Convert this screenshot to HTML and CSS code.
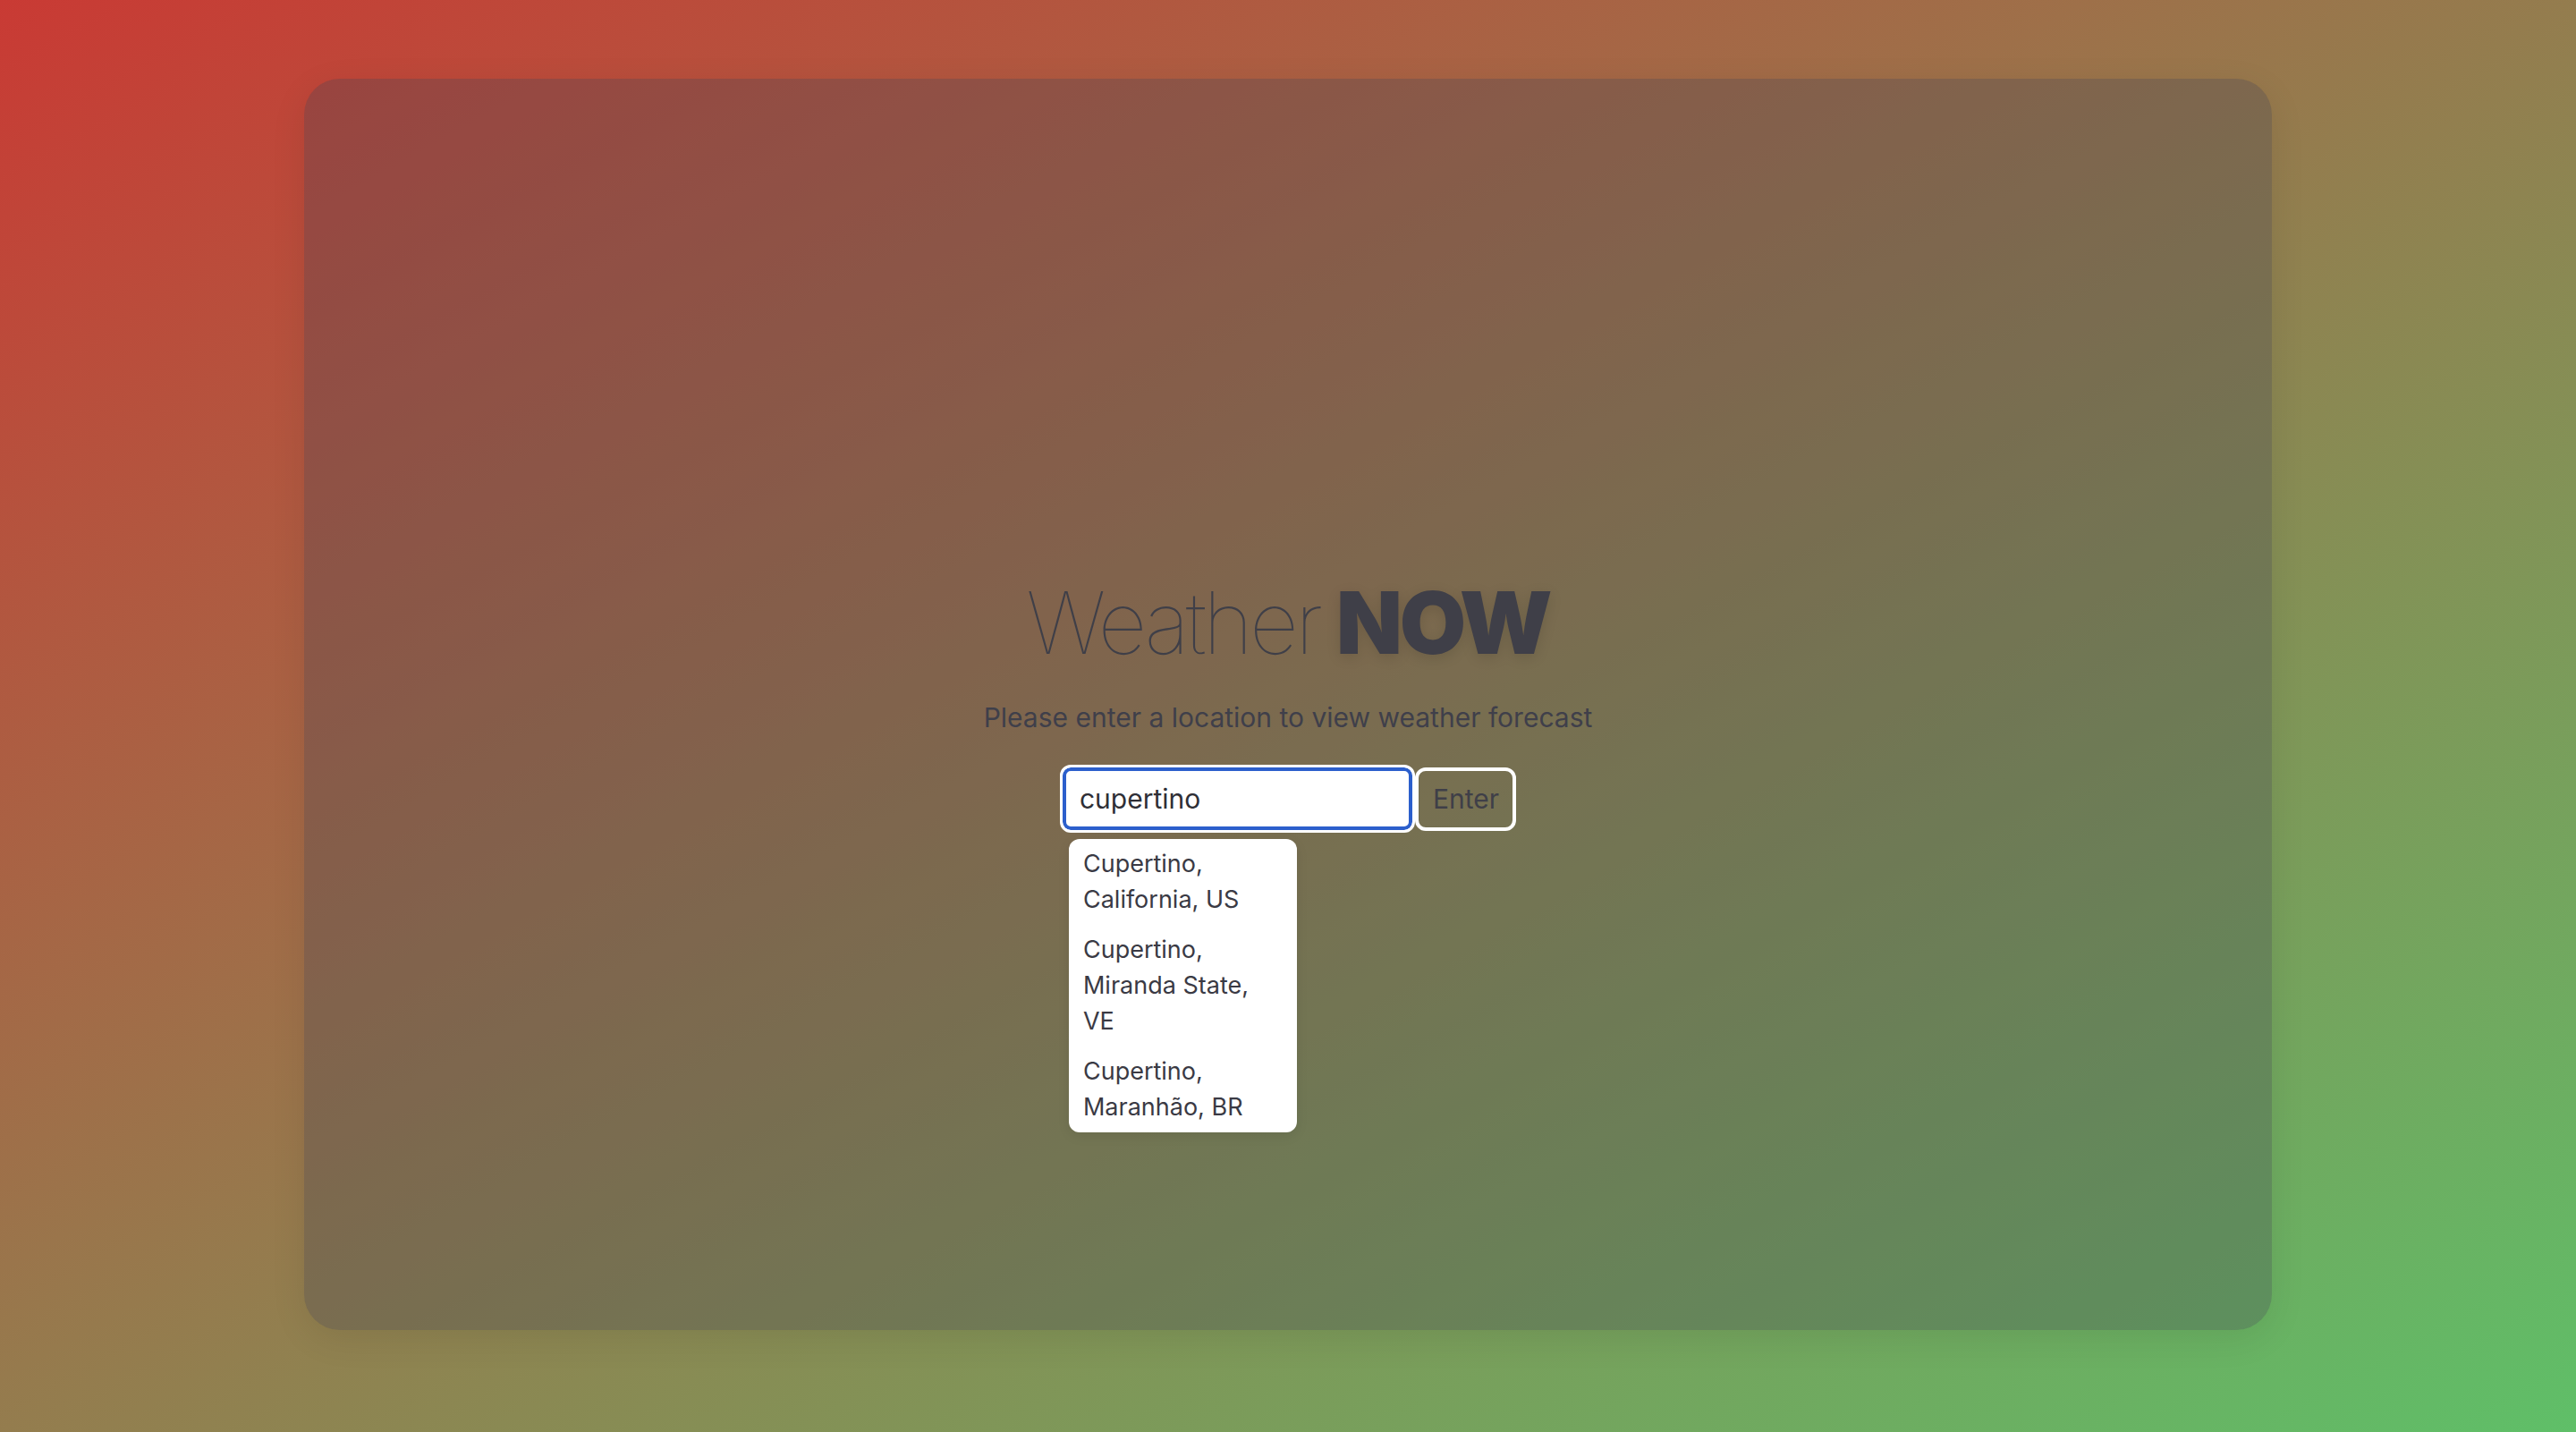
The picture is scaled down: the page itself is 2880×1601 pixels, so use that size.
FILE: index.html
```html
<!DOCTYPE html>
<html lang="en">
<head>
<meta charset="utf-8">
<title>Weather NOW</title>
<link rel="stylesheet" href="styles.css">
</head>
<body>
<main class="page">
  <section class="card">
    <div class="hero">
      <h1 class="title"><span class="title-light">Weather</span> <span class="title-bold">NOW</span></h1>
      <p class="subtitle">Please enter a location to view weather forecast</p>
      <form class="search">
        <div class="field">
          <input class="search-input" type="text" value="cupertino" aria-label="Location">
          <ul class="suggestions">
            <li class="suggestion">Cupertino, California, US</li>
            <li class="suggestion">Cupertino, Miranda State, VE</li>
            <li class="suggestion">Cupertino, Maranhão, BR</li>
          </ul>
        </div>
        <button class="search-btn" type="button">Enter</button>
      </form>
    </div>
  </section>
</main>
</body>
</html>
```

FILE: styles.css
```css
html, body {
  margin: 0;
  padding: 0;
}

body {
  font-family: Inter, "Noto Sans", "Liberation Sans", sans-serif;
  background: linear-gradient(to bottom right, #c93a34, #5fbf68);
  color: #3f3f48;
  min-height: 1601px;
}

.page {
  height: 1601px;
  box-sizing: border-box;
  padding-top: 88px;
  display: flex;
  justify-content: center;
  align-items: flex-start;
}

.card {
  width: 2200px;
  height: 1399px;
  border-radius: 40px;
  background: rgba(66, 66, 82, 0.3);
  box-shadow: 0 10px 40px rgba(0, 0, 0, 0.08);
  display: flex;
  align-items: center;
  justify-content: center;
}

.hero {
  display: flex;
  flex-direction: column;
  align-items: center;
  padding-top: 4px;
}

.title {
  margin: 0;
  font-size: 96px;
  line-height: 1;
  color: #3f3f48;
  letter-spacing: -4px;
  white-space: nowrap;
}

.title-light {
  font-weight: 100;
}

.title-bold {
  font-weight: 900;
  letter-spacing: -3px;
  text-shadow: 0 4px 16px rgba(0, 0, 0, 0.12);
}

.subtitle {
  margin: 36px 0 0;
  font-size: 30px;
  line-height: 45px;
  font-weight: 400;
  color: #3f3f4a;
}

.search {
  margin-top: 30px;
  display: flex;
  align-items: center;
}

.field {
  position: relative;
  z-index: 2;
}

.search-input {
  display: block;
  box-sizing: border-box;
  width: 397px;
  height: 76px;
  border: 3px solid #ffffff;
  border-radius: 12px;
  box-shadow: inset 0 0 0 4px #2c5fcc;
  padding: 0 19px;
  font-family: Inter, "Noto Sans", sans-serif;
  font-size: 30px;
  color: #2f2f36;
  background: #ffffff;
  outline: none;
}

.suggestions {
  position: absolute;
  top: calc(100% + 7px);
  left: 10px;
  width: 255px;
  box-sizing: border-box;
  margin: 0;
  padding: 0;
  list-style: none;
  background: #ffffff;
  border-radius: 12px;
  box-shadow: 0 4px 14px rgba(0, 0, 0, 0.08);
}

.suggestion {
  padding: 8px 17px 8px 16px;
  font-size: 27px;
  line-height: 40px;
  color: #3a3a44;
}

.search-btn {
  box-sizing: border-box;
  height: 71px;
  padding: 0 15px 0 16px;
  border: 4px solid #ffffff;
  border-radius: 12px;
  background: transparent;
  font-family: Inter, "Noto Sans", sans-serif;
  font-size: 30px;
  color: #3f3f48;
}
```
